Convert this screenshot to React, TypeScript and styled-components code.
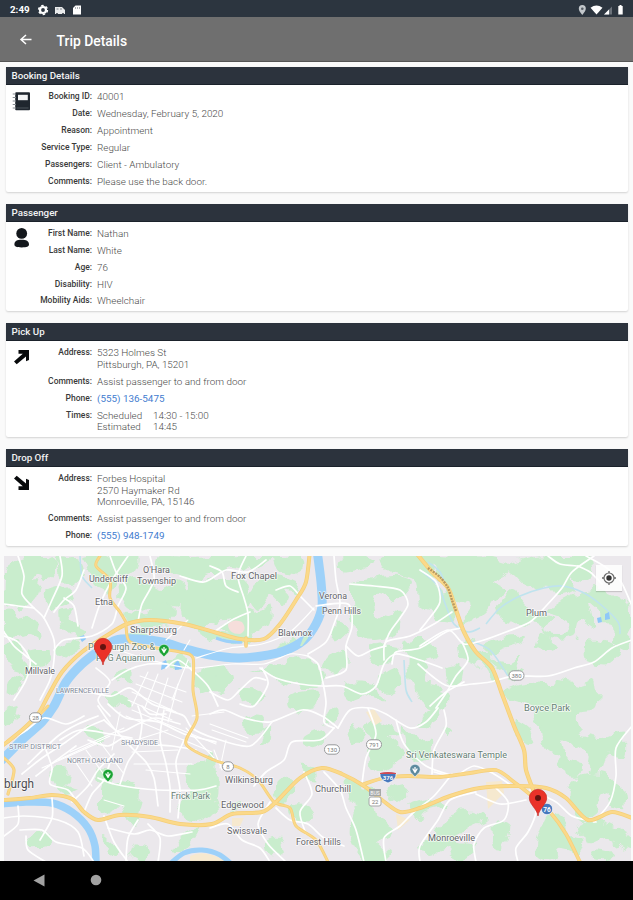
import React from "react";
import styled, { createGlobalStyle } from "styled-components";

const GlobalStyle = createGlobalStyle`
  * { box-sizing: border-box; }
  body { margin: 0; background: #fafafa; font-family: Roboto, "Liberation Sans", sans-serif; }
`;

const Screen = styled.div`
  width: 633px;
  height: 900px;
  overflow: hidden;
  display: flex;
  flex-direction: column;
  background: #fafafa;
`;

const StatusBar = styled.header`
  height: 17px;
  flex: none;
  display: flex;
  align-items: center;
  padding: 2px 9px 0 10px;
  background: #2c353f;
  color: #fff;
`;

const Clock = styled.span`
  width: 27px;
  font-size: 9.8px;
  font-weight: 700;
  line-height: 12px;
`;

const StatusIcons = styled.div<{ $end?: boolean }>`
  display: flex;
  margin-left: ${(p) => (p.$end ? "auto" : "0")};
  svg { display: block; }
`;

const AppBar = styled.div`
  height: 45px;
  flex: none;
  display: flex;
  align-items: center;
  padding: 0 19px 0 18px;
  background: #6f6f6f;
  border-bottom: 1.5px solid #555;
  color: #fff;
`;

const BackButton = styled.button`
  width: 16px;
  height: 16px;
  padding: 0;
  border: 0;
  background: none;
  color: inherit;
  svg { display: block; }
`;

const Title = styled.h1`
  margin: 3px 0 0 22.5px;
  font-size: 13.9px;
  line-height: 18px;
  font-weight: 500;
`;

const Cards = styled.main`
  flex: none;
  display: flex;
  flex-direction: column;
  gap: 11.8px;
  padding: 5.3px 5px 0 6px;
`;

const Card = styled.section`
  background: #fff;
  border-radius: 0 0 2px 2px;
  box-shadow: 0 1px 2px rgba(0, 0, 0, 0.16);
`;

const CardHeader = styled.h2`
  margin: 0;
  height: 18px;
  padding-left: 5.5px;
  background: #2c333d;
  border-bottom: 1px solid #1b222b;
  color: #f4f4f4;
  font-size: 9.75px;
  font-weight: 500;
  line-height: 18.5px;
`;

const CardBody = styled.div`
  display: flex;
  padding: 6.2px 0 4.5px 6px;
`;

const CardIcon = styled.div`
  width: 20px;
  height: 20px;
  flex: none;
  svg { display: block; }
`;

const Rows = styled.dl`
  margin: 0;
  display: flex;
  flex-direction: column;
  gap: 5.4px;
`;

const Row = styled.div`
  display: flex;
  line-height: 11.5px;
`;

const Label = styled.dt`
  width: 60px;
  margin-right: 5px;
  text-align: right;
  font-size: 8.5px;
  font-weight: 500;
  color: #3a3a3a;
  white-space: nowrap;
`;

const Value = styled.dd<{ $link?: boolean }>`
  margin: 0;
  font-size: 9.9px;
  font-weight: ${(p) => (p.$link ? 400 : 300)};
  color: ${(p) => (p.$link ? "#3f7ccf" : "#4a4a4a")};
  white-space: nowrap;
`;

const Line = styled.div`
  display: flex;
  height: 11.5px;
`;

const TimeKind = styled.span`
  width: 56px;
`;

const MapPanel = styled.div`
  width: 627px;
  height: 305px;
  flex: none;
  margin: 10px 0 0 4px;
  position: relative;
  overflow: hidden;
  background: #ebe8ec;
`;

const LocateButton = styled.button`
  position: absolute;
  top: 9px;
  right: 9px;
  width: 26px;
  height: 26px;
  padding: 5px;
  border: 0;
  background: rgba(255, 255, 255, 0.85);
  box-shadow: 0 1px 1px rgba(0, 0, 0, 0.15);
  svg { display: block; }
`;

const NavBar = styled.nav`
  flex: 1;
  display: flex;
  align-items: center;
  gap: 45px;
  padding-left: 33px;
  background: #000;
  svg { display: block; }
`;

type Entry = { label: string; lines?: string[]; link?: boolean; times?: [string, string][] };
type Section = { title: string; icon: React.ReactNode; entries: Entry[] };

const BookIcon = () => (
  <svg width="20" height="20" viewBox="0 0 20 20">
    <rect x="3.200" y="1.300" width="14.800" height="18" rx="1" fill="#1f262e" />
    <path d="M6 3.800h9.800v5.400H6z" fill="#f3f4f5" />
    <path d="M4.500 17h12" stroke="#596068" strokeWidth=".8" />
    <path d="M.7 3H4M.7 6.500H4M.7 10H4M.7 13.500H4M.7 17H4" stroke="#858b91" strokeWidth="1.200" />
  </svg>
);

const PersonIcon = () => (
  <svg width="20" height="20" viewBox="0 0 20 20" fill="#13171c">
    <ellipse cx="9.7" cy="5.4" rx="5.4" ry="5.4" />
    <path d="M2.400 16.500c0-3.500 2.600-4.700 7.200-4.700s7.400 1.200 7.400 4.700c0 2-2 2.900-7.300 2.900s-7.300-.9-7.300-2.900z" />
  </svg>
);

const ArrowIcon = ({ down }: { down?: boolean }) => (
  <svg width="20" height="20" viewBox="0 0 20 20">
    <g transform={down ? "matrix(1 0 0 -1 0 20)" : undefined}>
      <path d="M6.500 3H17v10l-3 1.200V9.400L4.700 17.300 2 14.500l8.800-7.800H6.500z" fill="#080a0c" />
    </g>
  </svg>
);

const sections: Section[] = [
  {
    title: "Booking Details",
    icon: <BookIcon />,
    entries: [
      { label: "Booking ID:", lines: ["40001"] },
      { label: "Date:", lines: ["Wednesday, February 5, 2020"] },
      { label: "Reason:", lines: ["Appointment"] },
      { label: "Service Type:", lines: ["Regular"] },
      { label: "Passengers:", lines: ["Client - Ambulatory"] },
      { label: "Comments:", lines: ["Please use the back door."] },
    ],
  },
  {
    title: "Passenger",
    icon: <PersonIcon />,
    entries: [
      { label: "First Name:", lines: ["Nathan"] },
      { label: "Last Name:", lines: ["White"] },
      { label: "Age:", lines: ["76"] },
      { label: "Disability:", lines: ["HIV"] },
      { label: "Mobility Aids:", lines: ["Wheelchair"] },
    ],
  },
  {
    title: "Pick Up",
    icon: <ArrowIcon />,
    entries: [
      { label: "Address:", lines: ["5323 Holmes St", "Pittsburgh, PA, 15201"] },
      { label: "Comments:", lines: ["Assist passenger to and from door"] },
      { label: "Phone:", lines: ["(555) 136-5475"], link: true },
      { label: "Times:", times: [["Scheduled", "14:30 - 15:00"], ["Estimated", "14:45"]] },
    ],
  },
  {
    title: "Drop Off",
    icon: <ArrowIcon down />,
    entries: [
      { label: "Address:", lines: ["Forbes Hospital", "2570 Haymaker Rd", "Monroeville, PA, 15146"] },
      { label: "Comments:", lines: ["Assist passenger to and from door"] },
      { label: "Phone:", lines: ["(555) 948-1749"], link: true },
    ],
  },
];

/** Turns "x,y x,y ..." into a smooth path through every point. */
function curve(points: string, closed = false): string {
  const p = points.split(" ").map((s) => s.split(",").map(Number));
  const n = p.length;
  const at = (i: number) => (closed ? p[(i + n) % n] : p[Math.max(0, Math.min(n - 1, i))]);
  let d = `M${p[0][0]} ${p[0][1]}`;
  for (let i = 0; i < (closed ? n : n - 1); i++) {
    const [a, b, c, e] = [at(i - 1), at(i), at(i + 1), at(i + 2)];
    d += `C${b[0] + (c[0] - a[0]) / 7} ${b[1] + (c[1] - a[1]) / 7} ${c[0] - (e[0] - b[0]) / 7} ${c[1] - (e[1] - b[1]) / 7} ${c[0]} ${c[1]}`;
  }
  return closed ? d + "Z" : d;
}

const woods = [
  "4,572 14,562 30,556 52,556 58,570 48,580 36,574 28,588 20,600 4,604",
  "22,584 40,580 36,598 22,608 16,600",
  "4,612 14,610 24,618 38,626 40,640 28,634 14,638 4,632",
  "6,644 22,642 20,656 30,668 24,680 14,668 6,662",
  "58,556 78,560 84,576 72,586 60,572",
  "44,592 62,586 74,598 62,604 50,608",
  "60,610 72,608 68,620 86,630 80,640 62,628",
  "64,642 78,640 72,654 60,660 56,650",
  "30,650 48,648 46,664 34,666",
  "84,556 104,556 116,572 110,592 96,586 88,570",
  "108,558 136,556 134,570 122,578 110,566",
  "118,586 138,578 160,590 176,582 190,592 178,606 160,604 140,612 124,604",
  "124,612 146,614 154,602 174,608 170,624 148,628 128,622",
  "158,556 194,556 226,556 226,572 204,574 196,590 180,576 162,572",
  "186,590 214,578 226,586 244,580 246,600 224,606 216,622 196,628 182,616",
  "214,556 262,556 300,556 300,574 278,570 272,560 254,570 234,566 222,572",
  "212,582 240,582 250,598 240,614 218,620 208,602",
  "248,594 268,576 294,582 300,596 288,592 282,604 270,596 256,610",
  "224,624 240,608 258,612 270,606 270,622 252,634 234,634 218,630",
  "192,628 222,634 246,634 250,642 214,640",
  "128,634 146,628 148,636 134,640",
  "250,674 280,664 306,658 318,668 324,682 308,688 286,684 262,674",
  "276,648 292,638 298,646 284,652",
  "206,668 230,670 232,684 220,692 206,684",
  "242,688 256,688 264,696 254,706 240,698",
  "292,694 318,690 314,708 290,708",
  "340,558 360,556 374,562 360,570 342,572",
  "352,584 376,578 398,576 412,582 398,598 378,592 374,612 388,618 400,610 398,632 374,640 356,630",
  "382,556 426,556 430,574 440,590 434,608 420,604 416,580 394,574 384,568",
  "376,644 398,646 392,660 378,664 370,652",
  "400,644 418,640 436,644 432,658 410,660",
  "336,622 348,628 338,640 330,636",
  "330,656 344,648 346,666 334,676 322,668",
  "344,682 372,682 382,700 370,696 354,702 344,694",
  "378,680 396,670 402,684 386,694",
  "408,658 428,664 424,680 440,684 436,694 414,688",
  "424,556 458,556 486,556 508,562 506,574 492,582 506,590 494,600 484,614 460,624 472,608 458,600 456,620 436,618 430,596 448,590 436,576",
  "506,566 536,556 586,556 594,566 590,580 568,578 576,590 560,596 548,586 528,588 516,578",
  "496,610 512,590 526,604 538,614 556,620 542,628 560,634 568,622 548,612 566,598 596,588 618,596 630,606 630,648 614,644 612,626 590,604 594,628 580,622 574,636 552,638 534,624 508,624",
  "588,640 618,648 606,664 586,660 584,648",
  "542,632 556,644 544,650 534,646",
  "486,644 500,638 526,636 520,644 502,650 488,658",
  "490,660 510,662 520,656 516,668 524,672 512,682 506,672",
  "460,640 476,646 498,670 494,682 476,662 462,658",
  "422,690 446,694 444,710 424,706",
  "446,668 460,668 456,684 446,680",
  "500,694 524,684 554,686 558,680 580,684 596,680 596,708 578,714 580,732 600,738 624,732 624,758 606,756 600,770 588,772 590,756 570,744 548,734 534,720 534,706",
  "542,726 560,738 566,756 582,764 580,776 564,774 558,758 544,748",
  "514,720 530,730 530,742 518,736",
  "568,790 584,774 606,774 614,788 600,796 596,814 584,820 572,806",
  "608,782 626,794 624,808 610,802",
  "538,840 550,812 566,822 572,836 584,840 580,854 560,850 552,862 538,856",
  "574,826 594,820 612,826 630,836 630,852 606,838 590,842",
  "594,848 610,850 614,860 592,860",
  "422,716 438,708 434,726 420,728",
  "444,724 452,730 446,738",
  "370,720 388,726 402,734 390,738 404,752 394,764 378,772 366,756 376,744 364,732",
  "402,726 420,742 432,738 428,760 410,758",
  "350,726 364,734 356,742 350,734",
  "386,790 404,784 408,794 396,804 388,798",
  "346,778 364,786 376,790 368,804 384,818 368,812 352,802",
  "356,808 382,816 392,836 376,840 388,856 364,860 350,836",
  "408,806 430,800 448,806 426,812 420,820",
  "450,816 474,812 486,820 466,830 458,842 476,846 464,860 444,850 430,856 420,844 434,836",
  "494,820 510,826 504,846 494,844",
  "276,782 290,778 294,790 280,804 276,794",
  "290,806 304,804 314,816 298,822",
  "300,766 316,770 318,780 308,778",
  "246,716 260,716 264,730 252,736 246,728",
  "264,730 272,726 270,738 260,744",
  "306,738 324,730 320,744 308,748",
  "324,714 338,708 336,720 326,724",
  "208,754 216,760 216,796 210,802 202,790",
  "50,770 66,768 66,786 78,790 64,794 54,784",
  "102,786 118,782 138,788 138,812 126,816 118,808 102,814 100,800",
  "186,768 202,764 210,768 212,790 216,812 196,820 180,808 188,786",
  "96,770 106,768 112,782 102,788",
  "92,726 102,732 100,742 88,734",
  "4,712 18,706 16,718 4,724",
  "28,838 50,834 48,844 32,846",
  "104,838 118,850 114,856 104,846",
  "134,842 148,844 154,854 140,860 130,852",
  "126,818 136,814 138,824 130,826",
  "112,672 130,666 130,682 118,678",
  "110,694 126,696 130,706 112,704",
  "164,662 184,656 190,666 176,670",
  "196,676 210,668 216,684 200,692",
  "198,828 188,846 172,852 184,834",
  "266,842 280,838 284,850 272,856",
  "228,806 242,800 242,808 232,812",
  "10,676 22,680 18,692 6,696",
];

const rivers: [string, number][] = [
  ["0,762 22,740 42,722 54,706 66,682 82,664 100,650 116,640 138,639 162,642 186,649 210,655 238,658 262,656 284,651 304,640 316,624 322,606 321,582 317,550", 9],
  ["0,804 26,802 52,803 72,812 88,828 95,846 96,866", 7.5],
  ["170,864 184,853 202,850 220,855 236,868", 5],
];

const streams = [
  "486,624 500,608 520,596 544,588 562,586 582,592 600,604 618,622 620,634",
  "420,570 438,586 446,606 454,624 468,632 480,628",
  "428,562 440,572 448,592",
  "404,660 406,690 412,702",
  "80,556 82,576 92,588",
  "468,640 490,650 508,676",
];

const minorRoads = [
  "18,556 24,576 22,594 34,608 44,618 54,640 54,660 50,680 40,700",
  "60,556 62,576 52,600 44,618", "84,570 76,590 64,600 54,612",
  "110,556 116,572 126,588 118,606 112,624 92,636 64,640 54,650",
  "128,556 112,580 100,604 92,628", "150,556 154,580 142,604 138,622",
  "180,576 204,582 226,570 248,572 266,560", "4,636 18,642 30,660 26,680 14,700",
  "4,604 18,606 34,608", "64,598 74,606 78,626",
  "246,556 238,576 244,598 248,614 248,636", "214,632 232,620 250,612",
  "210,566 222,572 226,586 238,592", "276,590 290,586 300,596 314,610",
  "334,556 336,580 340,604 334,624 326,642 308,654",
  "350,584 374,586 400,590 408,604 400,618 390,632 384,646",
  "316,606 348,604 352,626 346,646 346,670 326,678",
  "308,656 318,664 322,678 326,702 324,722 334,728",
  "260,668 276,678 300,684 322,686 342,686 362,694 376,686 384,664 396,654 420,660 442,668",
  "384,660 386,642 410,636 434,624 452,612",
  "420,570 436,582 440,602 428,620 420,630",
  "392,664 396,652 420,648 446,632 462,628",
  "4,632 14,646 26,656 36,664", "420,646 448,630 464,644 484,640 506,632 530,622 546,606 562,588 572,572 594,556",
  "578,566 590,572 602,584", "462,642 468,660 456,676 448,690 436,708",
  "418,664 432,676 448,686 472,684 490,682 514,676 548,676 574,668 594,662 612,648 632,640",
  "430,706 446,692 464,682", "586,556 604,566 620,580 632,606",
  "210,692 228,700 240,690 254,678 266,680", "166,668 178,660 194,672 208,686 218,706",
  "262,668 268,684 254,706 240,704", "210,714 224,710 244,718 270,722 302,710 322,716 338,728",
  "334,728 320,740 292,742 284,760 266,772 254,786", "338,728 350,710 370,708 386,714 410,728 426,722 438,708",
  "368,708 376,734 366,758 362,784", "396,720 404,744 426,766 454,776",
  "324,772 340,790 346,808 356,830 364,862", "304,772 312,794 300,812 306,834",
  "386,862 384,838 400,826 414,812 434,796 452,774", "276,808 290,820 308,824 324,838 344,846",
  "270,802 258,824 268,844 286,862", "210,828 228,824 242,840 260,848 270,862",
  "496,788 508,802 504,820 484,828 474,844 476,862",
  "534,794 536,812 528,832 516,848 518,862", "476,792 450,800 438,820 420,846 420,862",
  "530,790 556,802 572,816 596,822", "434,772 454,776 474,766 494,774 512,786",
  "476,794 500,804 526,800", "444,710 446,726 434,750 432,774",
  "632,726 616,748 616,776 610,802 594,822",
  "166,710 184,716 192,728 214,738 250,746 272,722",
  "4,742 24,732 44,718 66,724 84,716", "28,764 58,736 78,724 98,716",
  "22,774 42,758 66,742 86,728 104,720", "36,776 54,762 76,746",
  "98,706 112,726 132,748 146,762 154,778 158,806", "108,704 126,718 158,722 184,734 216,742",
  "104,720 120,732 138,724 156,718 180,724", "88,740 108,746 124,738 144,744 172,746 196,750",
  "60,740 80,730 110,734 132,738", "138,706 142,722 138,746 128,762 120,784",
  "164,710 160,738 166,764 170,788 170,812", "184,740 176,762 180,790 178,818",
  "98,778 114,784 136,788 158,790 198,790 216,786", "84,812 92,794 104,780 110,762",
  "72,802 88,786 98,770 114,754", "52,798 52,818 40,840",
  "18,806 18,824 4,836", "4,818 24,816 58,820 78,832 84,856",
  "20,830 42,830 56,842 82,848 94,862", "26,836 28,850 46,862",
  "104,816 114,842 128,862", "138,820 128,838 126,862", "148,824 160,838 158,862",
  "108,828 134,834 150,830 168,836 192,832", "46,750 52,768 50,784 68,790 78,804",
  "142,706 150,714 166,714", "88,692 112,696 130,688 152,704 172,710",
  "96,668 110,682 98,700 110,716", "112,680 128,670 148,664 168,664",
  "548,556 560,564 578,566", "346,646 358,656 372,650 386,646",
];

const streetGrid = [
  "140,676 186,692", "136,684 182,702", "132,692 176,712", "128,700 172,720",
  "148,672 132,706", "158,674 144,710", "168,678 156,716", "178,684 168,722", "188,660 172,700",
  "166,640 188,620", "190,640 184,650", "132,710 216,744", "126,716 212,752",
  "70,752 124,728", "58,760 110,736", "42,768 96,744", "100,742 124,774", "86,750 108,780",
  "74,760 92,786", "130,742 168,730", "132,752 178,750", "134,764 192,764",
  "210,724 248,738", "212,730 246,742", "214,750 222,770", "226,740 220,768", "120,712 112,750",
  "186,728 214,758", "192,716 224,712", "104,800 124,806", "146,770 190,774",
];

const highways: [string, number][] = [
  ["100,556 96,566 110,580 110,598 120,612 127,624", 2.4],
  ["2,746 22,730 38,714 48,696 62,672 82,652 106,636 127,624 150,620 184,624 214,632 240,639 264,639 280,624 296,600 306,582 310,550", 3.4],
  ["126,626 130,642 156,648 180,652 193,658 193,690 197,718 186,744 214,760 240,768 258,780 274,802 290,808 296,826 316,840 328,862", 2.4],
  ["4,800 30,798 52,795 72,799 84,812 98,820 120,815 150,817 180,824 212,824 232,814 262,812 276,802 300,778 322,768 342,774 364,786 382,800 400,812 420,808 450,796 480,788 518,786 546,788 566,798 588,820 612,812 632,818", 3.4],
  ["364,784 384,778 408,776 440,777 470,773 496,770 514,782 532,796 550,812 566,834 580,862", 3.2],
  ["417,554 432,572 448,588 456,610 464,632 476,652 492,668 502,694 514,726 524,750 526,770 534,792", 3.6],
  ["4,758 14,770 8,794", 2.6], ["246,638 246,646", 3], ["48,706 32,722 8,742", 2.4],
];

type MapLabel = [text: string, x: number, y: number, width: number, kind?: "park" | "district" | "city"];
const labels: MapLabel[] = [
  ["Undercliff", 89, 582, 39], ["O'Hara", 143, 573, 27], ["Township", 137, 584, 39],
  ["Fox Chapel", 231, 578.5, 46], ["Etna", 95, 605, 18], ["Sharpsburg", 130, 632.5, 47],
  ["Blawnox", 278, 635.5, 34], ["Verona", 319, 598.5, 28], ["Penn Hills", 322, 613.500, 39],
  ["Plum", 526, 615.500, 21], ["Millvale", 25, 673.500, 30],
  ["Pittsburgh Zoo &", 88, 649.500, 67, "park"], ["PPG Aquarium", 96, 660.500, 59, "park"],
  ["LAWRENCEVILLE", 56, 693, 53, "district"], ["STRIP DISTRICT", 9, 748.500, 52, "district"],
  ["SHADYSIDE", 121, 744.500, 37, "district"], ["NORTH OAKLAND", 67, 762.500, 56, "district"],
  ["burgh", 4, 787.500, 30, "city"], ["Frick Park", 171, 798.500, 39, "park"],
  ["Wilkinsburg", 225, 782.500, 48], ["Edgewood", 221, 807.500, 43], ["Swissvale", 227, 834, 40],
  ["Forest Hills", 296, 845, 45], ["Churchill", 315, 792, 36], ["Boyce Park", 524, 710.500, 46, "park"],
  ["Sri Venkateswara Temple", 406, 757.500, 101, "park"], ["Monroeville", 428, 841, 47],
];

const labelStyle = {
  town: { size: 8.4, fill: "#65656a" },
  park: { size: 8.4, fill: "#668074" },
  district: { size: 6.4, fill: "#7f8797" },
  city: { size: 12.5, fill: "#4b4b50" },
};

const Shield = ({ x, y, w = 15, text }: { x: number; y: number; w?: number; text: string }) => (
  <g>
    <rect x={x - w / 2} y={y - 4.7} width={w} height="9.4" rx="4.500" fill="#fff" stroke="#96989a" />
    <text x={x} y={y + 2.3} textAnchor="middle" fontSize="6" fill="#77797c">{text}</text>
  </g>
);

const Pin = ({ x, y }: { x: number; y: number }) => (
  <g transform={`translate(${x} ${y})`}>
    <path d="M0 17.500C-1 10-8.700 6-8.700-.5a8.700 8.700 0 0 1 17.400 0C8.700 6 1 10 0 17.500z" fill="#ea3229" stroke="#c42e27" strokeWidth=".7" />
    <circle r="3" cy="-.6" fill="#64130f" />
  </g>
);

const PlaceMarker = ({ x, y, color }: { x: number; y: number; color: string }) => (
  <g transform={`translate(${x} ${y})`}>
    <path d="M0 7.200C-1 4.500-5.200 3.500-5.200-.5a5.200 5.200 0 0 1 10.400 0C5.200 3.500 1 4.500 0 7.200z" fill={color} stroke="#fff" strokeWidth=".5" />
    <path d="M-2.300-1.500 0 2.500l2.300-4M0-3v5" fill="none" stroke="#fff" strokeWidth="1.300" />
  </g>
);

const TripMap = () => (
  <svg width="627" height="305" viewBox="4 556 627 305" fontFamily='Roboto, "Liberation Sans", sans-serif' strokeLinejoin="round">
    <defs>
      <filter id="rough" x="0" y="0" width="100%" height="100%">
        <feTurbulence type="fractalNoise" baseFrequency="0.075" numOctaves="2" seed="7" />
        <feDisplacementMap in="SourceGraphic" scale="14" xChannelSelector="R" yChannelSelector="G" />
        <feGaussianBlur stdDeviation="0.5" />
      </filter>
    </defs>
    <g filter="url(#rough)" fill="#c9edcd">
      {woods.map((w) => <path key={w} d={curve(w, true)} />)}
    </g>
    <g fill="#f6e9cf">
      <path d="M232 818h12l-4 8h-8zM366 712l8-3 8 12-8 5zM396 814l14 6-12 10zM486 782l16-1 2 12-16 16z" />
      <path d="M228 624q6-6 14-2 6 8-2 12-12 0-12-10z" fill="#f6dedb" />
      <path d="M190 856q14-7 34 4v6h-34z" />
    </g>
    <g fill="none" stroke="#bfe3ee" strokeWidth="1.600">
      {streams.map((s) => <path key={s} d={curve(s)} />)}
    </g>
    <g fill="none" stroke="#9dd1f9">
      {rivers.map(([r, w]) => <path key={r} d={curve(r)} strokeWidth={w} />)}
      <path d="M216 638q12 5 26 4" strokeWidth="3" />
    </g>
    <g fill="#8fc8f8">
      <path d="M79 637l5-2 2 4-4 3zM162 662l4-2 2 7-7 3zM174 664l4-4 4 9-7 1zM597 618l4-1 1 5-4 1zM605 614l4-2 1 7-5 1z" />
    </g>
    <path d="M300 646l4-10 6-6-2 8-6 8z" fill="#c9edcd" />
    <g fill="none" stroke="#fff" strokeLinecap="round">
      {streetGrid.map((s) => <path key={s} d={curve(s)} strokeWidth="1.1" />)}
      {minorRoads.map((s) => <path key={s} d={curve(s)} strokeWidth="1.700" />)}
      <path d={curve("118,650 150,660 190,668 232,664 264,664 290,654 308,656")} strokeWidth="1.200" />
      <path d={curve("196,658 230,648 262,644 290,632 314,608")} strokeWidth="1.200" />
    </g>
    <g fill="none" strokeLinecap="round">
      {highways.map(([h, w]) => <path key={h} d={curve(h)} stroke="#f5cf79" strokeWidth={w + 0.6} />)}
      {highways.map(([h, w]) => <path key={h} d={curve(h)} stroke="#fbd98a" strokeWidth={w - 0.8} />)}
      <path d={curve("428,568 440,577 448,588 452,600 456,611")} stroke="#a78958" strokeWidth="2.400" strokeDasharray="2 1" strokeLinecap="butt" opacity=".8" />
    </g>
    {labels.map(([text, x, y, width, kind]) => {
      const s = labelStyle[kind ?? "town"];
      return (
        <text key={text} x={x} y={y} textLength={width} lengthAdjust="spacingAndGlyphs" fontSize={s.size} fill={s.fill} stroke="#fff" strokeOpacity=".75" strokeWidth="1.600" paintOrder="stroke">
          {text}
        </text>
      );
    })}
    <Shield x={35.5} y={717.5} w={12} text="28" />
    <Shield x={228} y={766.5} w={11} text="8" />
    <Shield x={332} y={749.5} text="130" />
    <Shield x={374} y={744.5} text="791" />
    <Shield x={516.5} y={675.5} text="380" />
    <rect x="369" y="789" width="12" height="7" fill="#a5a8a8" />
    <text x="375" y="794.800" fontSize="5" fill="#fff" textAnchor="middle">BUS</text>
    <rect x="369" y="797" width="12" height="9" rx="2" fill="#fff" stroke="#a5a8a8" />
    <text x="375" y="804" fontSize="6" fill="#777" textAnchor="middle">22</text>
    <path d="M380 773q8-2 16 0 1 7-8 10-9-3-8-10z" fill="#4778bd" stroke="#fff" strokeWidth=".7" />
    <path d="M380 773q8-2 16 0v1h-16z" fill="#d14a53" />
    <text x="388" y="779.500" fontSize="6" fontWeight="700" fill="#fff" textAnchor="middle">376</text>
    <PlaceMarker x={164} y={650} color="#1ba335" />
    <PlaceMarker x={108} y={775} color="#1ba335" />
    <PlaceMarker x={415} y={770} color="#5d8a9e" />
    <circle cx="547" cy="809" r="5.700" fill="#4678bd" stroke="#fff" strokeWidth=".7" />
    <text x="547" y="811.500" fontSize="6.500" fontWeight="700" fill="#fff" textAnchor="middle">76</text>
    <Pin x={103} y={647.5} />
    <Pin x={538} y={798.5} />
  </svg>
);

export default function App() {
  return (
    <>
      <GlobalStyle />
      <Screen>
        <StatusBar>
          <Clock>2:49</Clock>
          <StatusIcons>
            <svg width="46" height="12" viewBox="0 0 46 12" fill="#fff">
              <circle cx="6" cy="6" r="3" fill="none" stroke="#fff" strokeWidth="2.200" />
              <circle cx="6" cy="6" r="4.500" fill="none" stroke="#fff" strokeWidth="1.300" strokeDasharray="2.500 2.210" />
              <path d="M18 3h7l3 3v4H18z" opacity=".9" />
              <path d="M19.500 5h2M23 5h2" stroke="#7d848b" />
              <circle cx="20" cy="10" r="1" fill="#2c353f" /><circle cx="26" cy="10" r="1" fill="#2c353f" />
              <path d="M38.500 1.500H44v9h-8V4z" />
              <path d="M38.500 3v2M40.500 3v2M42.500 3v2" stroke="#8b9299" strokeWidth=".7" />
            </svg>
          </StatusIcons>
          <StatusIcons $end>
            <svg width="48" height="12" viewBox="0 0 48 12" fill="#fff">
              <path d="M6.300 11C4 8 2.800 6.500 2.800 4.500a3.500 3.500 0 0 1 7 0C9.800 6.500 8.500 8 6.300 11z" fill="#c2c7cb" />
              <circle cx="6.300" cy="4.700" r="1.300" fill="#545c64" />
              <path d="M14.500 3.800Q20.500-.8 26.500 3.800L20.500 10.500z" />
              <path d="M28 10.500 36 2.500v8z" fill="#6b727a" /><path d="M28 10.500 33 5.500v5z" />
              <path d="M42.300 2h1.200V1h2v1h1.200v8.500h-4.400z" />
            </svg>
          </StatusIcons>
        </StatusBar>
        <AppBar>
          <BackButton aria-label="Back">
            <svg width="16" height="16" viewBox="0 0 16 16" fill="none" stroke="#fff" strokeWidth="1.500">
              <path d="M13.500 8.500H3M8 4 3 8.500 8 13" />
            </svg>
          </BackButton>
          <Title>Trip Details</Title>
        </AppBar>
        <Cards>
          {sections.map((s) => (
            <Card key={s.title}>
              <CardHeader>{s.title}</CardHeader>
              <CardBody>
                <CardIcon>{s.icon}</CardIcon>
                <Rows>
                  {s.entries.map((e) => (
                    <Row key={e.label}>
                      <Label>{e.label}</Label>
                      <Value $link={e.link}>
                        {e.lines?.map((l) => <Line key={l}>{l}</Line>)}
                        {e.times?.map(([kind, time]) => (
                          <Line key={kind}><TimeKind>{kind}</TimeKind><span>{time}</span></Line>
                        ))}
                      </Value>
                    </Row>
                  ))}
                </Rows>
              </CardBody>
            </Card>
          ))}
        </Cards>
        <MapPanel>
          <TripMap />
          <LocateButton aria-label="My location">
            <svg width="16" height="16" viewBox="0 0 16 16" fill="none" stroke="#6a6a6a">
              <circle cx="8" cy="8" r="5" strokeWidth="1.200" />
              <circle cx="8" cy="8" r="2.700" fill="#333" stroke="none" />
              <path d="M8 1v2M8 13v2M1 8h2M13 8h2" strokeWidth="1.300" />
            </svg>
          </LocateButton>
        </MapPanel>
        <NavBar>
          <svg width="12" height="13" viewBox="0 0 12 13"><path d="M.5 6.500 11.500.500v12z" fill="#a2a2a2" /></svg>
          <svg width="12" height="12" viewBox="0 0 12 12"><circle cx="6" cy="6" r="5.300" fill="#a2a2a2" /></svg>
        </NavBar>
      </Screen>
    </>
  );
}
